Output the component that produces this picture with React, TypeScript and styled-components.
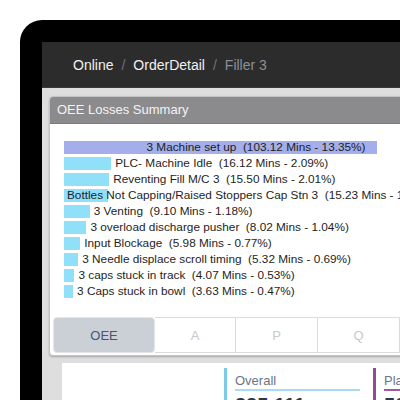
import React from 'react'
import styled, { createGlobalStyle } from 'styled-components'

const GlobalStyle = createGlobalStyle`
  html, body {
    margin: 0;
    padding: 0;
    overflow: hidden;
    background: #ffffff;
    font-family: "Liberation Sans", Arial, sans-serif;
  }
  #root {
    width: 400px;
    height: 400px;
    overflow: hidden;
  }
  * {
    box-sizing: border-box;
  }
`

const Device = styled.div`
  margin: 20px 0 0 20px;
  width: 480px;
  min-width: 480px;
  height: 440px;
  background: #000000;
  border-top-left-radius: 22px;
  padding: 22px 0 0 22px;
`

const Screen = styled.div`
  display: flex;
  flex-direction: column;
  height: 100%;
  background: #dedede;
`

const TopBar = styled.div`
  display: flex;
  align-items: center;
  height: 46px;
  padding-left: 31px;
  background: #2c2c2c;
  border-bottom: 1px solid #3a3a3a;
  font-size: 14px;
`

const Crumb = styled.span<{ $current?: boolean }>`
  color: ${(p) => (p.$current ? '#8b9099' : '#f1f1f1')};
`

const Slash = styled.span`
  color: #6f7378;
  margin: 0 8px;
`

const Content = styled.div`
  display: flex;
  flex-direction: column;
  align-items: flex-start;
  padding: 8px 0 0 7px;
`

const Panel = styled.div`
  width: 460px;
  min-width: 460px;
  background: #ffffff;
  border: 1px solid #c3c3c3;
  border-radius: 4px;
  box-shadow: 0 1px 2px rgba(0, 0, 0, 0.25);
  overflow: hidden;
`

const PanelTitle = styled.div`
  height: 27px;
  padding-left: 7px;
  background: #8b8b8d;
  border-bottom: 1px solid #7d7d7f;
  color: #f3f3f3;
  font-size: 13px;
  line-height: 26px;
`

const Chart = styled.div`
  display: flex;
  flex-direction: column;
  gap: 3px;
  padding: 17px 0 19px 14px;
`

const Row = styled.div`
  display: flex;
  align-items: center;
  height: 13px;
`

const Bar = styled.div<{ $main?: boolean; $place: string }>`
  display: flex;
  align-items: center;
  justify-content: ${(p) => (p.$place === 'inside' ? 'flex-end' : 'flex-start')};
  flex-shrink: 0;
  height: 13px;
  padding: ${(p) => (p.$place === 'inside' ? '0 11px 0 0' : '0 0 0 3px')};
  background: ${(p) => (p.$main ? '#a3aeea' : '#90e0fa')};
`

const Label = styled.span<{ $after?: boolean }>`
  margin-left: ${(p) => (p.$after ? '4px' : '0')};
  color: #1e1e1e;
  font-size: 11.8px;
  line-height: 13px;
  white-space: pre;
`

const TabBar = styled.div`
  display: flex;
  height: 36px;
  margin: 0 0 2px 3px;
`

const Tab = styled.div<{ $active?: boolean; $w: number }>`
  display: flex;
  align-items: center;
  justify-content: center;
  flex-shrink: 0;
  width: ${(p) => p.$w}px;
  font-size: 13px;
  ${(p) =>
    p.$active
      ? `
    background: #cbd0d6;
    color: #4a5470;
    border: 1px solid #e3e6ea;
    border-radius: 4px;
  `
      : `
    background: #ffffff;
    color: #c6c9cd;
    border-top: 1px solid #d9dbde;
    border-bottom: 1px solid #d9dbde;
    border-right: 1px solid #d9dbde;
  `}
`

const Lower = styled.div`
  display: flex;
  gap: 13px;
  width: 460px;
  min-width: 460px;
  margin: 7px 0 0 13px;
  padding: 5px 0 0 162px;
  height: 60px;
  background: #ffffff;
`

const Stat = styled.div<{ $color: string }>`
  flex-shrink: 0;
  width: 136px;
  padding-left: 8px;
  border-left: 3px solid ${(p) => p.$color};
`

const StatLabel = styled.div<{ $line: string }>`
  width: 125px;
  padding-top: 4px;
  line-height: 17px;
  font-size: 13px;
  color: #6b7585;
  border-bottom: 2px solid ${(p) => p.$line};
`

const StatValue = styled.div`
  margin-top: 2px;
  font-size: 20px;
  font-weight: 600;
  line-height: 24px;
  color: #2f3746;
`

const losses = [
  { name: '3 Machine set up', mins: 103.12, pct: 13.35, place: 'inside' },
  { name: 'PLC- Machine Idle', mins: 16.12, pct: 2.09, place: 'after' },
  { name: 'Reventing Fill M/C 3', mins: 15.5, pct: 2.01, place: 'after' },
  { name: 'Bottles Not Capping/Raised Stoppers Cap Stn 3', mins: 15.23, pct: 1.97, place: 'over' },
  { name: '3 Venting', mins: 9.1, pct: 1.18, place: 'after' },
  { name: '3 overload discharge pusher', mins: 8.02, pct: 1.04, place: 'after' },
  { name: 'Input Blockage', mins: 5.98, pct: 0.77, place: 'after' },
  { name: '3 Needle displace scroll timing', mins: 5.32, pct: 0.69, place: 'after' },
  { name: '3 caps stuck in track', mins: 4.07, pct: 0.53, place: 'after' },
  { name: '3 Caps stuck in bowl', mins: 3.63, pct: 0.47, place: 'after' },
]

const tabs = [
  { id: 'OEE', w: 102, active: true },
  { id: 'A', w: 81 },
  { id: 'P', w: 82 },
  { id: 'Q', w: 82 },
  { id: '', w: 120 },
]

const App = () => {
  return (
    <>
      <GlobalStyle />
      <Device>
        <Screen>
          <TopBar>
            <Crumb>Online</Crumb>
            <Slash>/</Slash>
            <Crumb>OrderDetail</Crumb>
            <Slash>/</Slash>
            <Crumb $current>Filler 3</Crumb>
          </TopBar>
          <Content>
            <Panel>
              <PanelTitle>OEE Losses Summary</PanelTitle>
              <Chart>
                {losses.map((item, i) => {
                  const text = `${item.name}  (${item.mins.toFixed(2)} Mins - ${item.pct.toFixed(2)}%)`
                  const width = item.mins * 3.05 - 2
                  return (
                    <Row key={item.name}>
                      <Bar $main={i === 0} $place={item.place} style={{ width }}>
                        {item.place !== 'after' && <Label>{text}</Label>}
                      </Bar>
                      {item.place === 'after' && <Label $after>{text}</Label>}
                    </Row>
                  )
                })}
              </Chart>
              <TabBar>
                {tabs.map((t, i) => (
                  <Tab key={i} $w={t.w} $active={t.active}>
                    {t.id}
                  </Tab>
                ))}
              </TabBar>
            </Panel>
            <Lower>
              <Stat $color="#7ccae8">
                <StatLabel $line="#a8dcf0">Overall</StatLabel>
                <StatValue>225.111</StatValue>
              </Stat>
              <Stat $color="#8e4d8e">
                <StatLabel $line="#9a5c9a">Planned</StatLabel>
                <StatValue>502.3</StatValue>
              </Stat>
            </Lower>
          </Content>
        </Screen>
      </Device>
    </>
  )
}

export default React.memo(App)
